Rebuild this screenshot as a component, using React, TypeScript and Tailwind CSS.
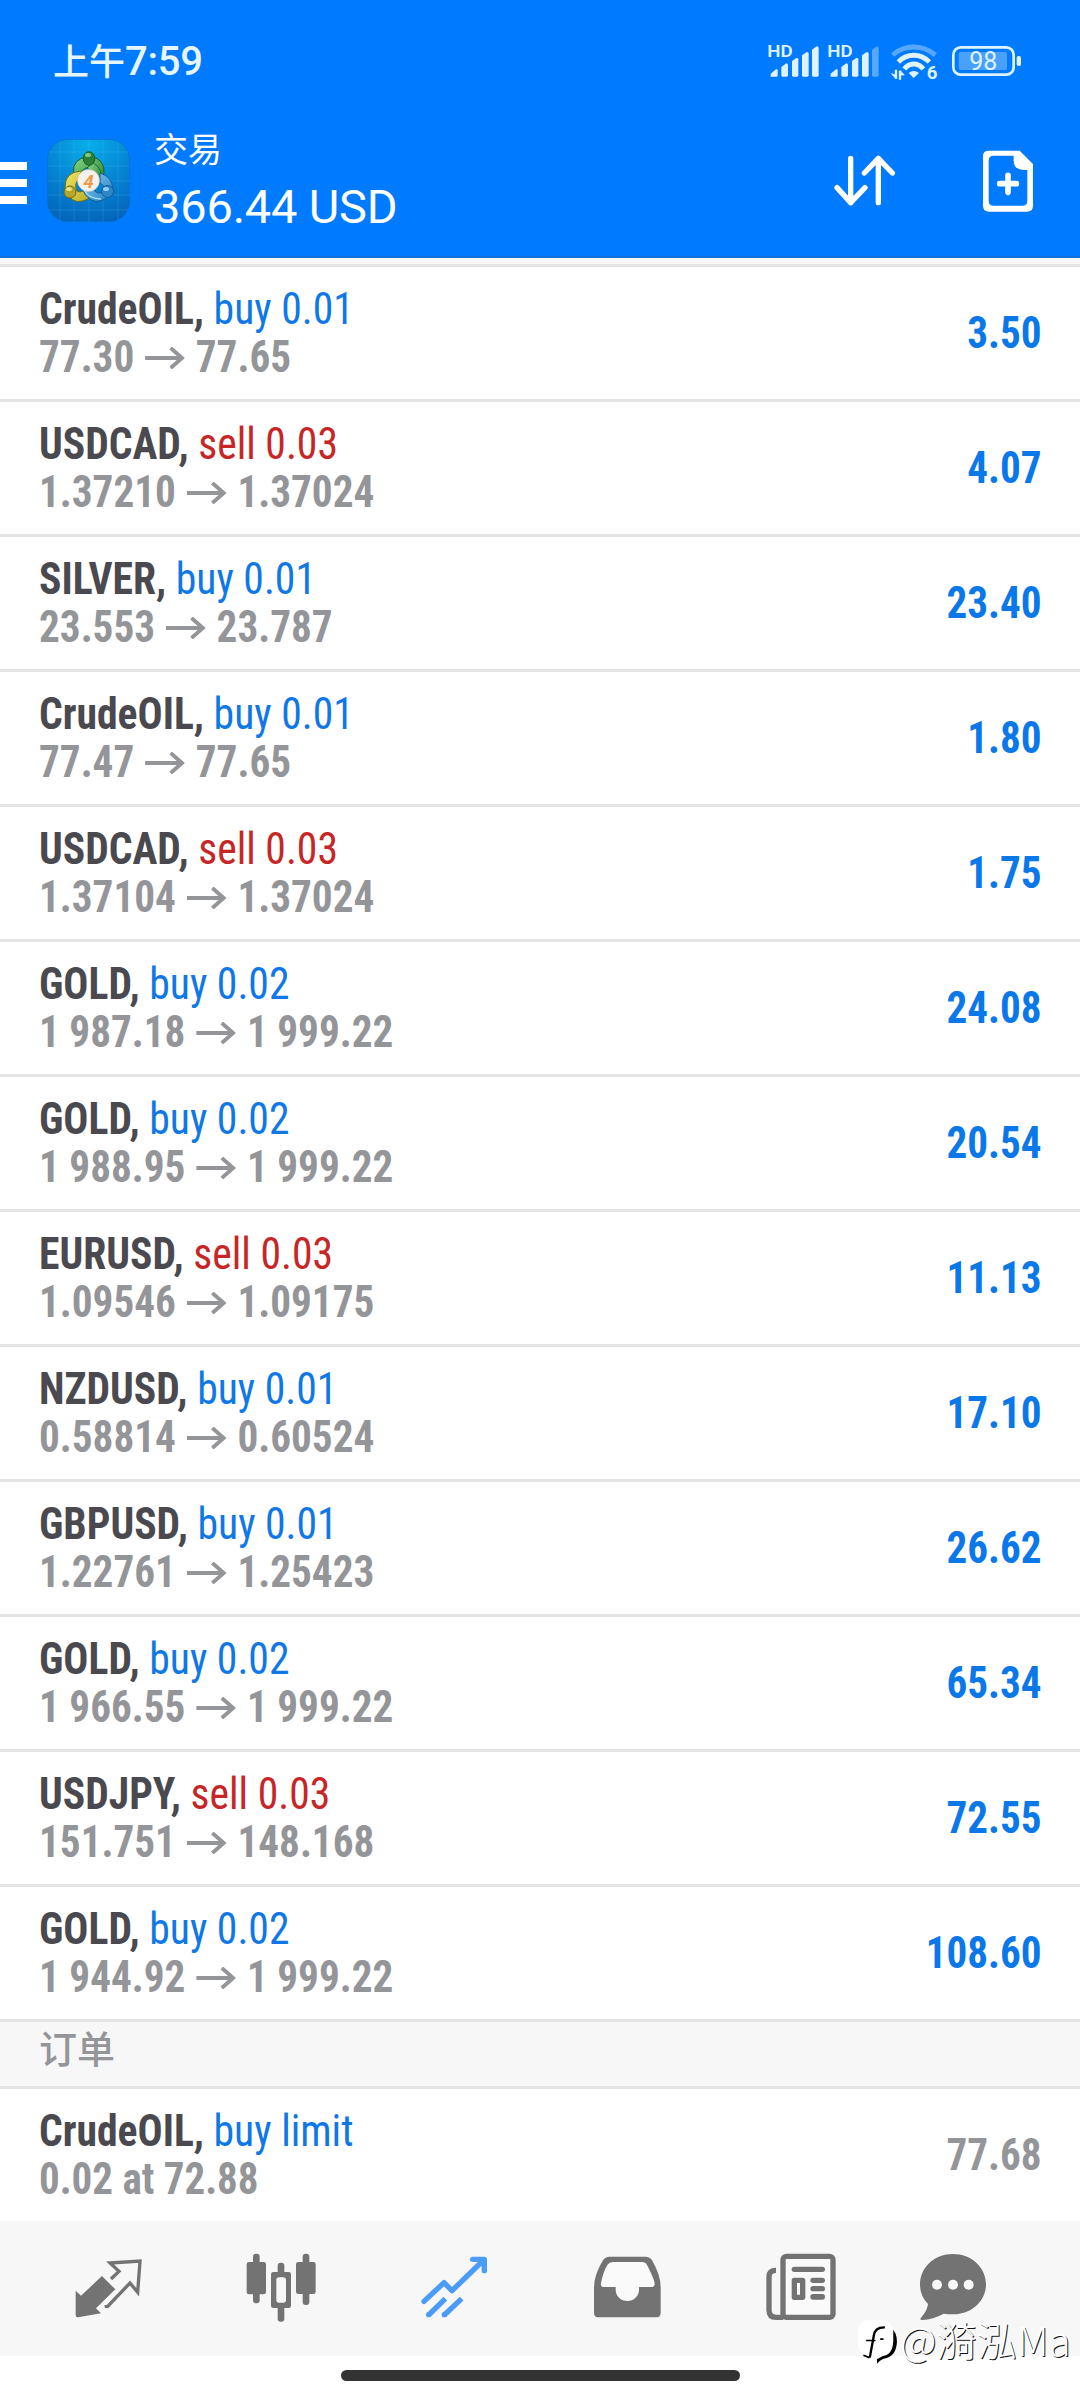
type Trade = {
  symbol: string;
  side: "buy" | "sell";
  volume: string;
  open: string;
  current: string;
  profit: string;
};

const trades: Trade[] = [
  { symbol: "CrudeOIL", side: "buy", volume: "0.01", open: "77.30", current: "77.65", profit: "3.50" },
  { symbol: "USDCAD", side: "sell", volume: "0.03", open: "1.37210", current: "1.37024", profit: "4.07" },
  { symbol: "SILVER", side: "buy", volume: "0.01", open: "23.553", current: "23.787", profit: "23.40" },
  { symbol: "CrudeOIL", side: "buy", volume: "0.01", open: "77.47", current: "77.65", profit: "1.80" },
  { symbol: "USDCAD", side: "sell", volume: "0.03", open: "1.37104", current: "1.37024", profit: "1.75" },
  { symbol: "GOLD", side: "buy", volume: "0.02", open: "1 987.18", current: "1 999.22", profit: "24.08" },
  { symbol: "GOLD", side: "buy", volume: "0.02", open: "1 988.95", current: "1 999.22", profit: "20.54" },
  { symbol: "EURUSD", side: "sell", volume: "0.03", open: "1.09546", current: "1.09175", profit: "11.13" },
  { symbol: "NZDUSD", side: "buy", volume: "0.01", open: "0.58814", current: "0.60524", profit: "17.10" },
  { symbol: "GBPUSD", side: "buy", volume: "0.01", open: "1.22761", current: "1.25423", profit: "26.62" },
  { symbol: "GOLD", side: "buy", volume: "0.02", open: "1 966.55", current: "1 999.22", profit: "65.34" },
  { symbol: "USDJPY", side: "sell", volume: "0.03", open: "151.751", current: "148.168", profit: "72.55" },
  { symbol: "GOLD", side: "buy", volume: "0.02", open: "1 944.92", current: "1 999.22", profit: "108.60" },
];

function Signal({ weak = false }: { weak?: boolean }) {
  return (
    <svg viewBox="0 0 159 105" className="w-[53px] h-[35px] overflow-visible" fill="#dff3ff">
      <text x="1" y="41" fontSize="50" fontWeight="600" textLength="76" lengthAdjust="spacingAndGlyphs" className="font-['Roboto']">HD</text>
      <path d="M11 101V92L28 78Q32 78 32 82V97Q32 101 28 101Z" />
      <path d="M43 101V72L58 61Q63 61 63 66V97Q63 101 59 101H47Q43 101 43 97Z" />
      <path d="M75 97V54L89 44Q94 44 94 49V97Q94 101 90 101H79Q75 101 75 97Z" />
      <path d="M105 97V37L119 27Q125 27 125 32V97Q125 101 121 101H109Q105 101 105 97Z" />
      <path d="M135 97V20L149 10Q155 10 155 15V97Q155 101 151 101H139Q135 101 135 97Z" opacity={weak ? 0.38 : 1} />
    </svg>
  );
}

function Wifi() {
  return (
    <svg viewBox="0 0 147 114" className="w-[49px] h-[38px] overflow-visible" fill="none" stroke="#dff3ff" strokeWidth="15">
      <path d="M8 36Q35 12 71 12T136 36" opacity="0.38" />
      <path d="M25 57Q45 37 71 37T118 57" />
      <path d="M43 78Q54 63 71 63T100 78" />
      <path d="M56 90Q71 78 87 90L71 105Z" fill="#dff3ff" stroke="none" />
      <path d="M18 80V107M30 110V84" strokeWidth="7" />
      <path d="M4 92L18 107V96ZM30 82L43 96H30Z" fill="#dff3ff" strokeWidth="2" />
      <text x="110" y="109" fontSize="56" fontWeight="700" fill="#dff3ff" stroke="none" className="font-['Roboto']">6</text>
    </svg>
  );
}

function Battery() {
  return (
    <svg viewBox="0 0 213 96" className="w-[71px] h-[32px] overflow-visible">
      <rect x="7" y="7" width="181" height="82" rx="22" fill="none" stroke="#dff3ff" strokeWidth="8" />
      <rect x="23" y="21" width="145" height="54" rx="6" fill="#dff3ff" opacity="0.32" />
      <rect x="197" y="33" width="13" height="30" rx="6" fill="#dff3ff" />
      <text x="97" y="75" fontSize="75" fontWeight="450" textAnchor="middle" fill="#dff3ff" className="font-['Roboto']">98</text>
    </svg>
  );
}

function AppLogo() {
  return (
    <svg viewBox="0 0 83 83" className="w-[83px] h-[83px]">
      <defs>
        <radialGradient id="tile" cx="50%" cy="5%" r="100%">
          <stop offset="0" stopColor="#08aeea" />
          <stop offset="0.55" stopColor="#0583d2" />
          <stop offset="1" stopColor="#0463b8" />
        </radialGradient>
        <linearGradient id="green" x1="0" y1="0" x2="1" y2="1">
          <stop offset="0" stopColor="#8bd98a" />
          <stop offset="1" stopColor="#1f7f2c" />
        </linearGradient>
        <linearGradient id="yellow" x1="0" y1="0" x2="1" y2="1">
          <stop offset="0" stopColor="#efe763" />
          <stop offset="1" stopColor="#b5a722" />
        </linearGradient>
        <linearGradient id="blue" x1="0" y1="0" x2="1" y2="1">
          <stop offset="0" stopColor="#8fd2f2" />
          <stop offset="1" stopColor="#1a7cc2" />
        </linearGradient>
      </defs>
      <rect x="0.400" y="0.400" width="82.200" height="82.200" rx="20" fill="url(#tile)" stroke="#0470cc" strokeWidth="0.8" />
      <path d="M13 2V81M27 0V83M42 0V83M56 0V83M71 2V81M2 13H81M0 27H83M0 42H83M0 56H83M2 71H81" stroke="#5cc4f5" strokeOpacity="0.3" strokeWidth="0.7" />
      <path d="M28 40Q23 25 34 19.500Q42 16 50 19.500Q61 26 55 42L50 44Q51 30 42 28Q33 30 34 38Z" fill="url(#green)" stroke="#175f2b" />
      <path d="M46 24Q58 30 52 46L48 48Q50 34 40 29Z" fill="url(#green)" stroke="#175f2b" strokeWidth="0.8" />
      <path d="M34 32Q18 33 18 48Q20 60 30 62.500Q42 63 48 52L38 48Q36 55 30 52Q26 44 34 38Z" fill="url(#yellow)" stroke="#716c18" />
      <path d="M53 34Q66 38 65.500 50Q62 62 49 62.500Q39 60 36 51L46 50Q50 56 56 53Q60 48 53 44Z" fill="url(#blue)" stroke="#14599a" />
      <path d="M37 51Q42 60 54 60" fill="none" stroke="#a8dcf5" strokeWidth="1.5" />
      <ellipse cx="42" cy="19.500" rx="5.800" ry="6.800" fill="#2c7f36" stroke="#1a6029" />
      <ellipse cx="41" cy="16" rx="3" ry="2" fill="#80c97e" />
      <circle cx="23" cy="53" r="6" fill="#b3a62a" stroke="#716c18" />
      <ellipse cx="22" cy="50" rx="3" ry="2" fill="#e9e17a" />
      <circle cx="60.500" cy="52.500" r="6" fill="#2f86c6" stroke="#14599a" />
      <ellipse cx="59" cy="50" rx="3" ry="2" fill="#8fd0f2" />
      <circle cx="41.500" cy="41.500" r="11" fill="#f4f1ee" stroke="#c9c3b4" strokeWidth="0.6" />
      <text x="41.500" y="48.500" fontSize="19" fontWeight="700" fontStyle="italic" textAnchor="middle" fill="#f0994a" className="font-['Roboto']">4</text>
    </svg>
  );
}

function SortIcon() {
  return (
    <svg viewBox="0 0 189 165" className="w-[63px] h-[55px]" fill="none" stroke="#fff" strokeWidth="16" strokeLinecap="round" strokeLinejoin="round">
      <path d="M53 16V149M12 104L53 149L96 104" />
      <path d="M136 149V16M94 60L136 16L178 60" />
    </svg>
  );
}

function NewOrderIcon() {
  return (
    <svg viewBox="0 0 150 186" className="w-[50px] h-[62px]">
      <path d="M18 2H110L150 42V168Q150 185 132 185H18Q0 185 0 168V18Q0 2 18 2ZM32 17Q17 17 17 32V152Q17 167 32 167H118Q133 167 133 152V60H120Q92 58 92 32V17Z" fill="#fff" fillRule="evenodd" />
      <path d="M50 101H100M75 76V127" stroke="#fff" strokeWidth="17" strokeLinecap="round" />
    </svg>
  );
}

function Arrow() {
  return (
    <svg viewBox="0 0 42 22" className="inline-block w-[42px] h-[22px] ml-[11px] mr-[12px] -mt-[5px]" fill="none" stroke="currentColor" strokeWidth="4">
      <path d="M0 11H39M27 1L39 11L27 21" />
    </svg>
  );
}

function TradeRow({ trade }: { trade: Trade }) {
  return (
    <div className="h-[135px] border-b-3 border-[#e4e4e4] bg-white flex items-center justify-between pt-[2px] pl-[39px] pr-[38px]">
      <div className="leading-[48px] font-bold">
        <div className="text-[#4a494f] origin-left scale-x-[0.957]">
          {trade.symbol},{" "}
          <span className={trade.side === "buy" ? "font-normal text-[#0f78e6]" : "font-normal text-[#c62626]"}>
            {trade.side} {trade.volume}
          </span>
        </div>
        <div className="text-[#949599] origin-left scale-x-[0.947]">
          {trade.open}
          <Arrow />
          {trade.current}
        </div>
      </div>
      <div className="font-bold text-[#0b78ea] origin-right scale-x-[0.945]">{trade.profit}</div>
    </div>
  );
}

function BottomNav() {
  return (
    <div className="h-[135px] bg-[#f7f7f7] flex gap-[83px] pl-[64px] text-[#737373]">
      {/* Quotes */}
      <svg viewBox="192 63 270 405" className="w-[90px] h-[135px]">
        <path d="M306 228L346 268L288 325L303 340L235 352Q227 352 227 345V272L243 287Z" fill="currentColor" />
        <path d="M333 237L357 214L330 189L420 183L413 277L390 249L323 319L314 320" fill="none" stroke="currentColor" strokeWidth="10" />
      </svg>
      {/* Chart */}
      <svg viewBox="711 63 270 405" className="w-[90px] h-[135px]" fill="currentColor">
        <rect x="759" y="161" width="20" height="149" rx="9" />
        <rect x="740" y="186" width="58" height="97" rx="7" />
        <rect x="833" y="188" width="20" height="177" rx="9" />
        <rect x="813" y="216" width="60" height="108" rx="7" />
        <rect x="829" y="232" width="29" height="76" rx="8" fill="#f7f7f7" />
        <rect x="908" y="161" width="20" height="154" rx="9" />
        <rect x="888" y="186" width="59" height="96" rx="7" />
      </svg>
      {/* Trade */}
      <svg viewBox="150 63 270 405" className="w-[90px] h-[135px]" fill="none" stroke="#4a9cf7" strokeWidth="16">
        <path d="M192 304L252 248L276 272L371 180M338 178H373V212" strokeLinecap="round" strokeLinejoin="round" />
        <path d="M206 345L256 296M253 345L305 296" />
        <circle cx="206" cy="344" r="8" fill="#4a9cf7" stroke="none" />
        <circle cx="253" cy="344" r="8" fill="#4a9cf7" stroke="none" />
      </svg>
      {/* History */}
      <svg viewBox="669 63 270 405" className="w-[90px] h-[135px]">
        <path d="M748 170H857Q869 170 876 181Q902 225 902 262V338Q902 352 888 352H716Q702 352 702 338V262Q702 225 729 181Q736 170 748 170Z" fill="currentColor" />
        <path d="M758 186H846Q857 186 861 195Q882 235 884 250Q885 261 873 261H837V269A35 34 0 0 1 767 269V261H733Q720 261 723 248Q730 215 742 195Q748 186 758 186Z" fill="#fafafa" />
      </svg>
      {/* News */}
      <svg viewBox="108 63 270 405" className="w-[90px] h-[135px]" fill="currentColor">
        <path d="M168 211Q147 211 147 230V330Q147 352 168 352H190" fill="none" stroke="currentColor" strokeWidth="16" />
        <rect x="189" y="169" width="150" height="183" rx="10" fill="#fafafa" stroke="currentColor" strokeWidth="16" />
        <rect x="215" y="200" width="100" height="16" rx="8" />
        <path d="M223 233H248Q256 233 256 241V292Q256 300 248 300H223Q215 300 215 292V241Q215 233 223 233ZM231 249V284H240V249Z" fillRule="evenodd" />
        <rect x="271" y="233" width="44" height="16" rx="8" />
        <rect x="271" y="258" width="44" height="16" rx="8" />
        <rect x="271" y="282" width="44" height="17" rx="8" />
      </svg>
      {/* Messages */}
      <svg viewBox="564 63 270 405" className="w-[90px] h-[135px] -ml-[21px]">
        <path d="M699 162C754 162 798 202 798 253C798 304 754 343 699 343Q684 343 671 341Q640 358 606 360Q598 360 603 353Q622 332 624 312Q600 288 600 253C600 202 644 162 699 162Z" fill="currentColor" />
        <g fill="#f7f7f7">
          <circle cx="651" cy="254" r="15" />
          <circle cx="699" cy="254" r="15" />
          <circle cx="746" cy="254" r="15" />
        </g>
      </svg>
    </div>
  );
}

function Watermark() {
  return (
    <div className="absolute left-[855px] top-[2318px] flex">
      <svg viewBox="405 355 140 140" className="w-[47px] h-[47px]">
        <path d="M508 380Q530 395 530 425Q528 468 496 475Q480 479 471 491L470 474Q512 462 514 425Z" fill="#000" />
        <path d="M440 362H490Q519 366 519 396V425Q516 466 488 468L470 478L440 470Q415 462 414 430V392Q418 364 440 362Z" fill="#fff" />
        <path d="M449 473Q455 440 461 408Q464 382 494 383" fill="none" stroke="#000" strokeWidth="7" />
        <path d="M438 422H466M430 466L448 473M480 418H490" fill="none" stroke="#000" strokeWidth="5" />
      </svg>
      <span className="-ml-[2px] -mt-[5px] font-['Noto_Sans_CJK_SC',sans-serif] font-light text-[40px] leading-[52px] tracking-[0.2px] text-white [text-shadow:1px_1px_0_#111] whitespace-nowrap">
        @漪泓Ma
      </span>
    </div>
  );
}

export default function App() {
  return (
    <div className="relative w-[1080px] h-[2400px] overflow-hidden bg-white flex flex-col font-['Roboto_Condensed','Noto_Sans_CJK_SC',sans-serif] text-[43.5px] leading-[48px]">
      {/* Header */}
      <div className="h-[258px] shrink-0 bg-[#007aff] border-b-2 border-[#1270d8] font-['Roboto','Noto_Sans_CJK_SC',sans-serif] text-white">
        <div className="h-[120px] pl-[53px] pr-[58px] flex justify-between text-[#e6f6ff]">
          <div className="pt-[38px] flex items-baseline leading-[48px] font-medium">
            <span className="text-[36px]">上午</span>
            <span className="text-[40px] font-medium -tracking-[0.3px]">7:59</span>
          </div>
          <div className="pt-[43px] flex items-start">
            <Signal />
            <div className="ml-[7px]">
              <Signal weak />
            </div>
            <div className="ml-[10px]">
              <Wifi />
            </div>
            <div className="ml-[12px] mt-[2px]">
              <Battery />
            </div>
          </div>
        </div>

        <div className="flex">
          <div className="w-[27px] pt-[42px] flex flex-col gap-[9px]">
            <div className="h-[8px] bg-white"></div>
            <div className="h-[8px] bg-white"></div>
            <div className="h-[8px] bg-white"></div>
          </div>
          <div className="ml-[20px] pt-[19px]">
            <AppLogo />
          </div>
          <div className="ml-[24px] pt-[6px]">
            <div className="text-[34px] leading-[48px]">交易</div>
            <div className="text-[47px] leading-[66px] font-[370] -tracking-[0.2px]">366.44 USD</div>
          </div>
          <div className="ml-auto mr-[47px] flex">
            <div className="pt-[33px]">
              <SortIcon />
            </div>
            <div className="ml-[87px] pt-[30px]">
              <NewOrderIcon />
            </div>
          </div>
        </div>
      </div>
      <div className="h-[9px] shrink-0 bg-[#f7f7f7] border-b-3 border-[#e4e4e4]"></div>

      {/* Positions */}
      {trades.map((trade, i) => (
        <TradeRow key={i} trade={trade} />
      ))}

      {/* Orders */}
      <div className="h-[67px] shrink-0 bg-[#f7f7f7] border-b-3 border-[#e4e4e4] pl-[39px] pt-[4px] text-[38px] leading-[48px] font-medium text-[#949599]">
        订单
      </div>
      <div className="h-[132px] shrink-0 flex items-center justify-between pt-[2px] pl-[39px] pr-[38px] font-bold text-[#949599]">
        <div>
          <div className="text-[#4a494f] origin-left scale-x-[0.957]">
            CrudeOIL, <span className="font-normal text-[#0f78e6]">buy limit</span>
          </div>
          <div className="origin-left scale-x-[0.942]">0.02 at 72.88</div>
        </div>
        <div className="origin-right scale-x-[0.945]">77.68</div>
      </div>

      <BottomNav />

      {/* Home indicator */}
      <div className="mt-[14px] mx-auto w-[399px] h-[11px] rounded-full bg-[#333]"></div>

      <Watermark />
    </div>
  );
}
